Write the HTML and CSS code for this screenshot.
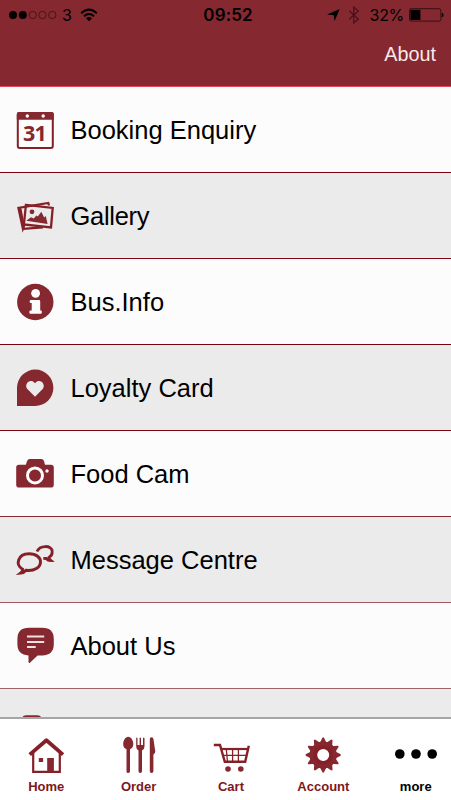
FILE: index.html
```html
<!DOCTYPE html>
<html lang="en">
<head>
    <meta charset="UTF-8">
    <meta name="viewport" content="width=device-width, initial-scale=1.0">
    <title>More</title>
    <link rel="stylesheet" href="styles.css">
</head>
<body>
    <header class="header">
        <div class="status">
            <div class="status-left">
                <svg class="signal" width="50" height="10" viewBox="0 0 50 10">
                    <circle cx="5" cy="5" r="4"/>
                    <circle cx="14.8" cy="5" r="4"/>
                    <g class="ring">
                        <circle cx="24.7" cy="5" r="3.7"/>
                        <circle cx="34.5" cy="5" r="3.7"/>
                        <circle cx="44.3" cy="5" r="3.7"/>
                    </g>
                </svg>
                <span class="carrier">3</span>
                <svg class="wifi" width="18" height="14" viewBox="0 0 18 14">
                    <path class="wave" d="M1.2 5.2Q9-2 16.8 5.2M4 8.2Q9 3.8 14 8.2"/>
                    <path d="M6 10.2Q9 8 12 10.2L9 13.2z"/>
                </svg>
            </div>
            <div class="time">09:52</div>
            <div class="status-right">
                <svg width="13" height="12" viewBox="0 0 13 12">
                    <path d="M12.7 0L7.6 12L6.8 6.2L0 5.6z"/>
                </svg>
                <svg class="bluetooth" width="12" height="18" viewBox="0 0 12 18">
                    <path d="M1.2 4.8L10.3 13L5.8 17V1L10.3 5L1.2 13.2"/>
                </svg>
                <span class="percent">32%</span>
                <svg class="battery" width="35" height="14" viewBox="0 0 35 14">
                    <rect class="case" x=".5" y=".7" width="31.3" height="12.4" rx="1.6"/>
                    <rect x="1.4" y="1.8" width="10" height="10.2"/>
                    <path d="M32.8 4.7Q34.6 5 34.6 7T32.8 9.3z"/>
                </svg>
            </div>
        </div>
        <div class="nav"><a class="nav-link">About</a></div>
    </header>

    <main class="list">
        <div class="row">
            <svg class="icon" viewBox="0 0 41 41">
                <rect class="line" x="2.8" y="3.9" width="35" height="35" rx="2" stroke-width="2"/>
                <path d="M1.8 10.4V5Q1.8 3 3.8 3H36.8Q38.8 3 38.8 5V10.8H1.8z"/>
                <circle class="light" cx="12.3" cy="7" r="1.7"/>
                <circle class="light" cx="28.2" cy="7" r="1.7"/>
                <text class="day" x="19.4" y="31.5">31</text>
            </svg>
            <span>Booking Enquiry</span>
        </div>
        <div class="row">
            <svg class="icon" viewBox="0 0 41 41">
                <path class="line" d="M9.5 29.5L7.9 33.8L3.4 12.9L33.3 8L34 10.5M7.9 33.8L28 32.4M8.5 30L5.2 12.8" stroke-width="2.2"/>
                <path class="line" d="M10.9 9.9L37.7 12.9L36 32.4L8.9 29.4z" stroke-width="2.3"/>
                <circle cx="17" cy="16.8" r="2.4"/>
                <path d="M11.3 25.8L16 22.2L18.8 23.4L21.4 20.6L22.8 21.5L26.3 16.8L29.2 22.4L30.8 21L32.6 29z"/>
            </svg>
            <span class="tight">Gallery</span>
        </div>
        <div class="row">
            <svg class="icon" viewBox="0 0 41 41">
                <circle cx="20.3" cy="21" r="18.2"/>
                <circle class="light" cx="20.6" cy="12.3" r="4.4"/>
                <path class="light" d="M15.6 19H24Q25.2 19 25.2 20.2V29.6H25.8Q26.8 29.6 26.8 30.6V31.8Q26.8 32.8 25.8 32.8H15.4Q14.4 32.8 14.4 31.8V30.6Q14.4 29.6 15.4 29.6H16.7V22H15.6Q14.7 22 14.7 21V20Q14.7 19 15.6 19z"/>
            </svg>
            <span>Bus.Info</span>
        </div>
        <div class="row">
            <svg class="icon" viewBox="0 0 41 41">
                <path d="M2 39V20.6A18.2 18.2 0 1 1 20.2 39z"/>
                <path class="light" d="M20 29.8L12.3 22.1C8.5 17.2 15.3 10.5 20 16.2C24.7 10.5 31.5 17.2 27.7 22.1z"/>
            </svg>
            <span>Loyalty Card</span>
        </div>
        <div class="row fade-1">
            <svg class="icon" viewBox="0 0 41 41">
                <path d="M4 11.8H10.8L12.2 7.8Q12.8 6 14.7 6H26.5Q28.3 6 28.9 7.8L30 11.8H36Q38.8 11.8 38.8 14.6V31.8Q38.8 34.6 36 34.6H4Q1.2 34.6 1.2 31.8V14.6Q1.2 11.8 4 11.8z"/>
                <circle class="ring-light" cx="20" cy="22.4" r="7.5"/>
                <circle class="light" cx="32" cy="18" r="1.7"/>
            </svg>
            <span>Food Cam</span>
        </div>
        <div class="row fade-2">
            <svg class="icon" viewBox="0 0 41 41">
                <path class="line" d="M7.6 30.2C-.2 25.8 2.8 15 14 14.8C21.5 14.8 25.5 18.6 25.5 23C25.5 28.3 19.5 32.3 11 31.3Q9 33.8 5.6 34.1Q7.9 32.3 7.6 30.2z" stroke-width="3"/>
                <path class="line" d="M22 12.6C24.5 6 36.8 5.7 37.2 12.5C37.4 15.6 36 17.2 34 18.4Q34 20 36 21.6Q33 21.7 31.2 19.5L28.3 19.4" stroke-width="2.8"/>
            </svg>
            <span>Message Centre</span>
        </div>
        <div class="row fade-3">
            <svg class="icon" viewBox="0 0 41 41">
                <path d="M14 2.7H27.2Q38.8 2.7 38.8 14V19Q38.8 30.2 27.2 30.4H22.6L15.2 37.6Q13.5 39 13.5 36.5V30.4Q2.4 29.8 2.4 19V14Q2.4 2.7 14 2.7z"/>
                <path class="text-lines" d="M12 11.5H29.2M12 17H29.2M12 22H20.7"/>
            </svg>
            <span>About Us</span>
        </div>
        <div class="row">
            <svg class="icon" viewBox="0 0 41 41">
                <rect x="7" y="4.2" width="19.5" height="34" rx="4"/>
            </svg>
        </div>
    </main>

    <footer class="tabs">
        <div class="tab">
            <svg class="tab-icon" viewBox="0 0 48 40">
                <path class="line" d="M7.7 20.6L24.4 6.2L41 20.6" stroke-width="3.8" stroke-linejoin="round"/>
                <path class="line" d="M11.2 18.5V37.8H37.8V18.5" stroke-width="2.2"/>
                <rect x="25.2" y="24" width="6.7" height="14"/>
                <rect x="16.8" y="24" width="4.3" height="4"/>
            </svg>
            <span>Home</span>
        </div>
        <div class="tab">
            <svg class="tab-icon" viewBox="0 0 48 40">
                <path d="M13.2 2.8C16 2.8 18.3 6.5 18.3 10C18.3 13 16.8 14.4 15 15.2V37.3Q15 39 13.2 39T11.5 37.3V15.2C9.6 14.4 8.2 13 8.2 10C8.2 6.5 10.5 2.8 13.2 2.8z"/>
                <path d="M21.2 4Q21.8 2.8 22.5 4V11H24.6V4Q25.3 2.8 26 4V11H28V4Q28.8 2.8 29.5 4V12.5Q29.5 15.4 27 16.6V37.3Q27 39 25.3 39T23.5 37.3V16.6Q21.2 15.4 21.2 12.5z"/>
                <path d="M34.8 4.8Q34.8 3.2 36.5 3.2T38.4 4.8L40.3 17.5Q40.2 19.5 38.4 20.5V37.3Q38.4 39 36.6 39T34.8 37.3z"/>
            </svg>
            <span>Order</span>
        </div>
        <div class="tab">
            <svg class="tab-icon" viewBox="0 0 48 40">
                <path class="line" d="M6.8 11H13L17.8 27.8H38.2L41.8 11.8" stroke-width="2.4"/>
                <path class="line" d="M14.2 15H41" stroke-width="2.2"/>
                <path class="line" d="M16 21.4H39.5M19.3 15L20.5 28M25.6 15V28M31.4 15V28" stroke-width="1.3"/>
                <circle cx="21" cy="35" r="2.8"/>
                <circle cx="33.8" cy="35" r="2.8"/>
            </svg>
            <span>Cart</span>
        </div>
        <div class="tab">
            <svg class="tab-icon" viewBox="0 0 48 40">
                <circle class="line" cx="24.2" cy="21" r="9.8" stroke-width="7.6"/>
                <g class="teeth">
                    <path id="teeth" d="M24.2 4.4L27.2 10.5H21.2zM24.2 37.6L27.2 31.5H21.2z"/>
                    <use href="#teeth" transform="rotate(30 24.2 21)"/>
                    <use href="#teeth" transform="rotate(60 24.2 21)"/>
                    <use href="#teeth" transform="rotate(90 24.2 21)"/>
                    <use href="#teeth" transform="rotate(120 24.2 21)"/>
                    <use href="#teeth" transform="rotate(150 24.2 21)"/>
                </g>
            </svg>
            <span>Account</span>
        </div>
        <div class="tab active">
            <svg class="tab-icon" viewBox="0 0 48 40">
                <circle cx="7.8" cy="20" r="4.8"/>
                <circle cx="24" cy="20" r="4.8"/>
                <circle cx="40.2" cy="20" r="4.8"/>
            </svg>
            <span>more</span>
        </div>
    </footer>
</body>
</html>
```
FILE: styles.css
```css
* {
    box-sizing: border-box;
}
body {
    margin: 0;
    height: 800px;
    display: flex;
    flex-direction: column;
    overflow: hidden;
    font-family: "Liberation Sans", Arial, sans-serif;
    background: #fff;
    color: #000;
}
svg {
    display: block;
    flex: none;
}
.header {
    flex: none;
    height: 87px;
    background: #852830;
    border-bottom: 1px solid #e24a58;
}
.status {
    display: grid;
    grid-template-columns: 1fr auto 1fr;
    align-items: center;
    height: 29px;
    padding: 0 7px 0 8px;
    font-family: Inter, sans-serif;
    font-size: 16px;
}
.status-left,
.status-right {
    display: flex;
    align-items: center;
}
.status-right {
    justify-content: flex-end;
}
.carrier {
    margin-left: 4px;
}
.wifi {
    margin-left: 8px;
}
.ring,
.wave,
.case,
.bluetooth {
    fill: none;
    stroke: #000;
}
.ring {
    stroke-width: .7;
    opacity: .65;
}
.wave {
    stroke-width: 2;
}
.case {
    stroke-width: 1;
    opacity: .6;
}
.bluetooth {
    margin-left: 8px;
    stroke-width: 1.2;
    opacity: .5;
}
.time {
    padding-left: 4px;
    font-size: 17px;
    font-weight: 600;
    letter-spacing: .1px;
}
.percent {
    margin-left: 10px;
    letter-spacing: -.3px;
}
.battery {
    margin-left: 5px;
}
.nav {
    display: flex;
    justify-content: flex-end;
    padding: 14px 15px 0 0;
}
.nav-link {
    font-size: 19.8px;
    line-height: 23px;
    color: #f7e9ea;
}
.list {
    flex: 1;
    min-height: 0;
    overflow: hidden;
}
.row {
    display: flex;
    align-items: center;
    gap: 14.5px;
    height: 86px;
    padding-left: 15px;
    border-bottom: 1px solid #780510;
    background: #fcfcfc;
    font-size: 25.5px;
}
.row span {
    padding-top: 2px;
}
.row .tight {
    letter-spacing: -.3px;
}
.row:nth-child(even) {
    background: #ebebeb;
}
.fade-1 {
    border-color: #8a2a32;
}
.fade-2 {
    border-color: #9c5a60;
}
.fade-3 {
    border-color: #a06468;
}
.icon {
    width: 41px;
    height: 41px;
    fill: #852830;
}
.line {
    fill: none;
    stroke: #852028;
}
.light {
    fill: #fcfcfc;
}
.row:nth-child(even) .light {
    fill: #ebebeb;
}
.ring-light {
    fill: none;
    stroke: #fcfcfc;
    stroke-width: 3;
}
.text-lines {
    stroke: #f3dfe0;
    stroke-width: 2;
}
.day {
    font-family: "Open Sans", sans-serif;
    font-size: 21.5px;
    font-weight: bold;
    text-anchor: middle;
    letter-spacing: -1px;
}
.tabs {
    flex: none;
    display: flex;
    height: 83px;
    border-top: 2px solid #a5a5a5;
    background: #fff;
}
.tab {
    flex: none;
    width: 92.4px;
    padding-top: 15px;
    display: flex;
    flex-direction: column;
    align-items: center;
    gap: 5px;
    font-size: 13px;
    font-weight: bold;
    line-height: 15px;
    color: #7d1820;
}
.tab-icon {
    width: 48px;
    height: 40px;
    fill: #852830;
}
.teeth {
    stroke: #852830;
    stroke-width: 2;
    stroke-linejoin: round;
}
.tab.active {
    color: #000;
}
.active .tab-icon {
    fill: #000;
}
```
